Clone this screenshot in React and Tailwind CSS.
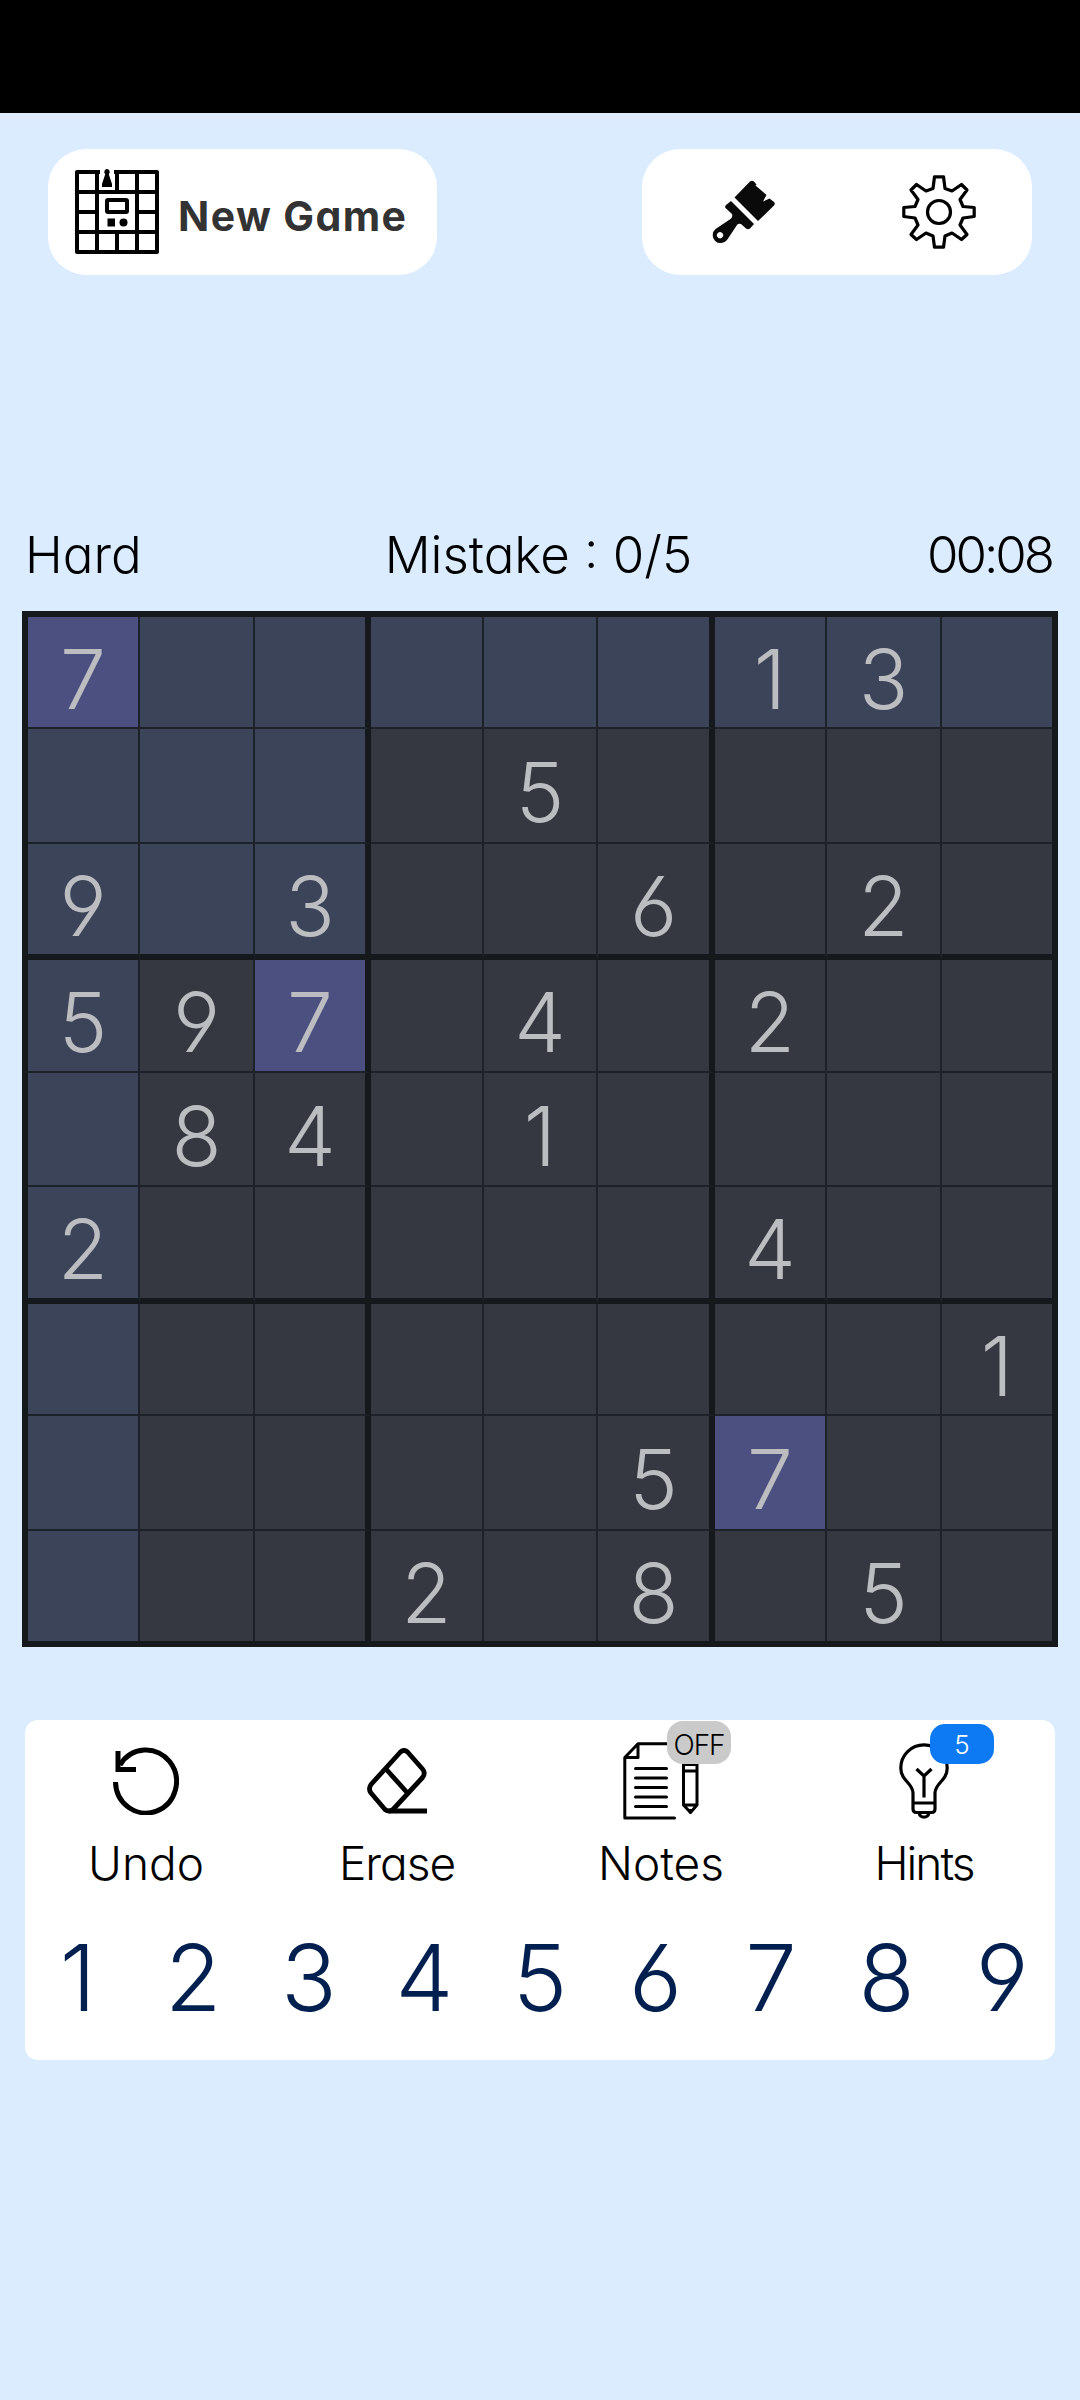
// src/App.jsx

import React from 'react';

// 0 = casilla vacía
const board = [
  [7, 0, 0, 0, 0, 0, 1, 3, 0],
  [0, 0, 0, 0, 5, 0, 0, 0, 0],
  [9, 0, 3, 0, 0, 6, 0, 2, 0],
  [5, 9, 7, 0, 4, 0, 2, 0, 0],
  [0, 8, 4, 0, 1, 0, 0, 0, 0],
  [2, 0, 0, 0, 0, 0, 4, 0, 0],
  [0, 0, 0, 0, 0, 0, 0, 0, 1],
  [0, 0, 0, 0, 0, 5, 7, 0, 0],
  [0, 0, 0, 2, 0, 8, 0, 5, 0],
];

const selected = { row: 0, col: 0 };

const cellColor = (row, col) => {
  const value = board[row][col];
  if (value !== 0 && value === board[selected.row][selected.col]) return 'bg-[#4b5080]';
  const sameBox =
    Math.floor(row / 3) === Math.floor(selected.row / 3) &&
    Math.floor(col / 3) === Math.floor(selected.col / 3);
  if (row === selected.row || col === selected.col || sameBox) return 'bg-[#3c4459]';
  return 'bg-[#353840]';
};

// Las líneas entre bloques de 3x3 son más gruesas
const cellBorders = (row, col) => {
  const right = col === 8 ? '' : col % 3 === 2 ? 'border-r-6 border-r-[#15191c]' : 'border-r-2 border-r-[#1d222a]';
  const bottom = row === 8 ? '' : row % 3 === 2 ? 'border-b-6 border-b-[#15191c]' : 'border-b-2 border-b-[#1d222a]';
  return `${right} ${bottom}`;
};

const BoardIcon = () => (
  <svg className="w-[84px] h-[86px]" viewBox="0 0 84 86" fill="none" stroke="#000" strokeWidth="4">
    <path d="M25 3H2V83H82V3H39" strokeLinejoin="round" />
    <path d="M22 3V83M42 3V23M62 3V83M42 63V83M2 23H82M2 43H22M62 43H82M2 63H82" />
    <rect x="32" y="31" width="20" height="12" rx="1" />
    <rect x="32.5" y="49.5" width="7.5" height="8" fill="#000" stroke="none" />
    <circle cx="48.5" cy="53.5" r="4" fill="#000" stroke="none" />
    <path d="M32 0a3 3 0 0 1 1.8 5.200L37 15v3H27v-3l3.2-9.800A3 3 0 0 1 32 0Z" fill="#000" stroke="none" />
  </svg>
);

const BrushIcon = () => (
  <svg className="w-[64px] h-[64px]" viewBox="0 0 64 64" fill="#0a0a0a">
    <path d="M22.5 17.5 38 1.5Q40 0 42 1.5L44.5 4.5L43.5 5.5L54.5 15L51 21.5L57.5 18.5L62 22Q63.5 23.5 62 25.5L46 41Z" />
    <path fillRule="evenodd" d="M19 21 42 44 38 48.5Q36 50 34 48.5L29 44Q26.5 43 25 45L15 60A8 8 0 1 1 3.5 49L18.5 39Q21 37 20 34L13.5 28Q12.5 26.5 14 25ZM8 52a3.2 3.2 0 1 0 .1 0Z" />
  </svg>
);

const GearIcon = () => (
  <svg className="w-[74px] h-[74px]" viewBox="0 0 74 74" fill="none" stroke="#000" strokeWidth="3.2" strokeLinejoin="round">
    <circle cx="37" cy="37" r="11.5" />
    <path d="M32.5 1.8H41.5L43 13.5L50 16L59.5 9.5L65 15L58 24.5L61 31.5L72.2 32.5V41.5L61 43L58 50L65 59.5L59.5 64.5L50 58L43 61L41.5 72.2H32.5L31 61L24 58L14.5 64.5L9 59.5L16 50L13 43L1.8 41.5V32.5L13 31.5L16 24.5L9 15L14.5 9.5L24 16L31 13.5Z" />
  </svg>
);

const UndoIcon = () => (
  <svg className="w-[66px] h-[68px]" viewBox="0 0 66 68" fill="none" stroke="#000" strokeWidth="5">
    <path d="M2.5 35A30.5 31.500 0 1 0 7 18" />
    <path d="M5 4V22.5H23" />
  </svg>
);

const EraseIcon = () => (
  <svg className="w-[60px] h-[66px]" viewBox="0 0 60 66" fill="none" stroke="#000" strokeWidth="4.8" strokeLinejoin="round">
    <path d="M33 4.5Q37 .5 41 4.5L55.5 21Q59 25 55.5 29.5L26 61.5Q22 64.5 18 61.5L4 45Q1 41 4 36.5Z" />
    <path d="M18.5 20.5 40.5 45M22 63H60" />
  </svg>
);

const NotesIcon = () => (
  <svg className="w-[76px] h-[78px]" viewBox="0 0 76 78" fill="none" stroke="#000" strokeWidth="3" strokeLinejoin="round" strokeLinecap="round">
    <path d="M52 1.8H15L1.8 15.5V76H51.5M15 1.8V15.5H1.8" />
    <path d="M12.5 26.5H43.5M12.5 36H43.5M12.5 45.5H43.5M12.5 55H43.5M12.5 64.5H43.5" />
    <path d="M60.5 12H74V63L67.5 70.5L60.5 63ZM60.5 22.5H74M60.5 29H74M60.5 63H74" />
    <path d="M64.5 67.5H70.5L67.5 71.5Z" fill="#000" strokeWidth="1" />
  </svg>
);

const HintsIcon = () => (
  <svg className="w-[50px] h-[76px]" viewBox="0 0 50 76" fill="none" stroke="#000" strokeWidth="3.2" strokeLinejoin="round">
    <path d="M14 60V50C14 40 1.8 38 1.8 25A23.2 23.2 0 0 1 48.2 25C48.2 38 36 40 36 50V66Q36 69.5 32.5 69.5H17.5Q14 69.5 14 66ZM14 60H36" />
    <path d="M25 54.5V33L17.5 26M25 33L32.5 26" />
    <path d="M20 70Q21 74.2 25 74.2Q29 74.2 30 70" />
  </svg>
);

const Tool = ({ icon, label, className, labelClass = '', children }) => (
  <button className={`relative flex flex-col items-center ${className}`}>
    <span className="flex h-[90px] items-center justify-center">{icon}</span>
    <span className={`mt-[9px] text-[46px] leading-[56px] whitespace-nowrap ${labelClass}`}>{label}</span>
    {children}
  </button>
);

const App = () => {
  return (
    <div className="h-[2400px] w-[1080px] overflow-hidden bg-[#dbecff] font-['Inter','Liberation_Sans',sans-serif] font-light text-black [font-feature-settings:'cv11','cv03','cv04']">
      <div className="h-[113px] bg-black" />
      <div className="h-9 bg-linear-to-b from-[#e0eafb] to-[#dbecff] to-50%" />

      <header className="flex justify-between pr-12 pl-12">
        <button className="flex h-[126px] w-[389px] items-center rounded-[38px] bg-white pl-[27px]">
          <BoardIcon />
          <span className="mt-[10px] ml-[19px] text-[41px] font-bold tracking-[1.4px] text-[#333] whitespace-nowrap">New Game</span>
        </button>
        <div className="flex h-[126px] w-[390px] items-center justify-between rounded-[38px] bg-white pr-[56px] pl-[70px]">
          <BrushIcon />
          <GearIcon />
        </div>
      </header>

      <div className="mt-[250px] grid h-[60px] grid-cols-[1fr_auto_1fr] items-center pr-[28px] pl-[25px] text-[51px] leading-[60px]">
        <span>Hard</span>
        <span>Mistake : 0/5</span>
        <span className="text-right tracking-[-3px]">00:08</span>
      </div>

      <main className="mt-[26px] ml-[22px] grid h-[1036px] w-[1036px] grid-cols-[112px_115px_116px_113px_114px_117px_112px_115px_110px] grid-rows-[112px_115px_116px_113px_114px_117px_112px_115px_110px] border-6 border-[#15191c]">
        {board.map((line, row) =>
          line.map((value, col) => (
            <div
              key={`${row}-${col}`}
              className={`flex items-center justify-center ${cellColor(row, col)} ${cellBorders(row, col)}`}
            >
              <span className="pt-[15px] text-[82px] leading-none font-[360] text-[#bcbdc0]">{value || ''}</span>
            </div>
          ))
        )}
      </main>

      <section className="mt-[73px] ml-[25px] h-[340px] w-[1030px] rounded-[13px] bg-white">
        <div className="flex h-[200px] pt-4">
          <Tool icon={<UndoIcon />} label="Undo" className="ml-[46px] w-[150px]" />
          <Tool icon={<EraseIcon />} label="Erase" className="ml-[101px] w-[150px]" labelClass="tracking-[-1px]" />
          <Tool icon={<NotesIcon />} label="Notes" className="ml-[114px] w-[150px]">
            <span className="absolute -top-[15px] left-[81px] flex h-[43px] w-[64px] items-center justify-center rounded-[16px] bg-[#cacaca] pt-1 text-[28px] tracking-[-1px]">
              OFF
            </span>
          </Tool>
          <Tool icon={<HintsIcon />} label="Hints" className="ml-[113px] w-[150px]" labelClass="tracking-[-2px]">
            <span className="absolute -top-[12px] left-[81px] flex h-[40px] w-[64px] items-center justify-center rounded-[15px] bg-[#0d7af3] text-[26px] text-white">
              5
            </span>
          </Tool>
        </div>
        <div className="-mr-[5px] -ml-[5px] grid grid-cols-9 pt-3">
          {[1, 2, 3, 4, 5, 6, 7, 8, 9].map((n) => (
            <button key={n} className="text-[92px] leading-[92px] font-[360] text-[#02204f]">
              {n}
            </button>
          ))}
        </div>
      </section>
    </div>
  );
};

export default App;
